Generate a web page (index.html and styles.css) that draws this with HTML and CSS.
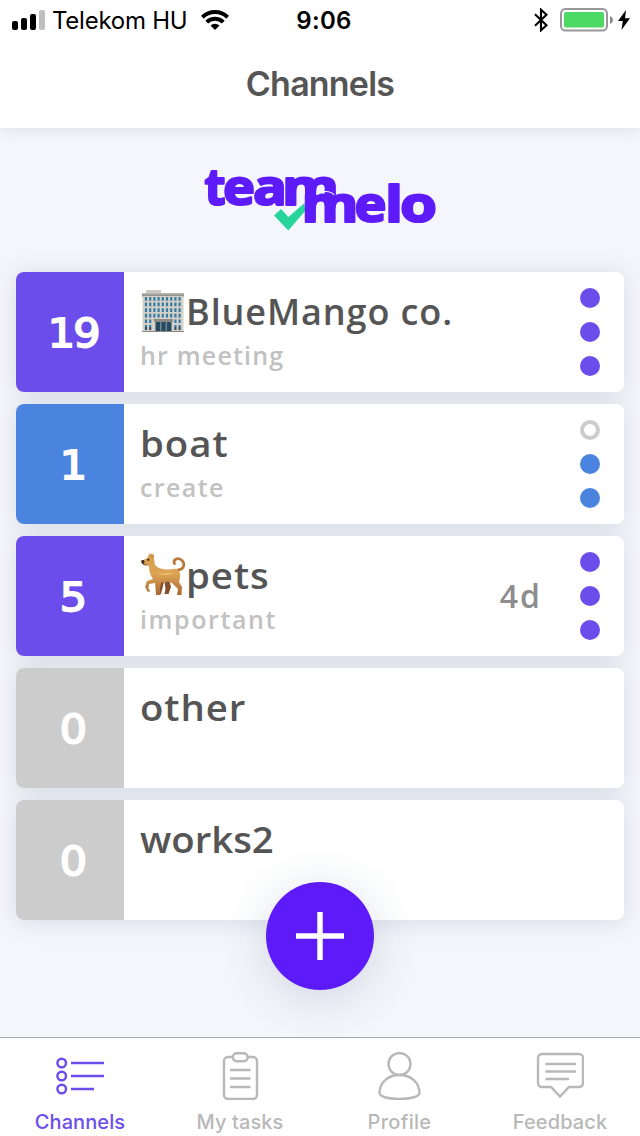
FILE: index.html
```
<!DOCTYPE html>
<html lang="en">
<head>
<meta charset="utf-8">
<title>Channels</title>
<link rel="stylesheet" href="styles.css">
</head>
<body>
<div class="screen">
  <header class="header">
    <div class="status">
      <div class="status-left">
        <svg width="33" height="20" viewBox="0 0 33 20"><rect x="0" y="11" width="6" height="9" rx="2"/><rect x="9" y="8" width="6" height="12" rx="2"/><rect x="18" y="4" width="6" height="16" rx="2"/><rect x="27" y="0" width="6" height="20" rx="2" fill="#bfbfbf"/></svg>
        <span class="carrier">Telekom HU</span>
        <svg class="wifi" width="28" height="20" viewBox="0 0 28 20" fill="none" stroke="#000" stroke-width="4"><path d="M1.300 7.200a18.200 18.200 0 0 1 25.400 0"/><path d="M5.700 12.200a11.800 11.800 0 0 1 16.600 0"/><path d="M14 20l-4.500-4.400a6.200 6.200 0 0 1 9 0z" fill="#000" stroke="none"/></svg>
      </div>
      <span class="time">9:06</span>
      <div class="status-right">
        <svg width="14" height="24" viewBox="0 0 14 24" fill="none" stroke="#000" stroke-width="2.100"><path d="M1 6.300l11.500 11L7 22.300V1.700l5.500 5L1 17.700"/></svg>
        <svg class="battery" width="54" height="24" viewBox="0 0 54 24"><rect x="1" y="1" width="46" height="21.500" rx="4.500" fill="#fff" stroke="#999" stroke-width="2"/><rect x="4" y="4" width="40" height="15.500" rx="2" fill="#4cd964"/><path d="M50 8c4 1.500 4 6.500 0 8z" fill="#8c8c8c"/></svg>
        <svg class="bolt" width="12" height="20" viewBox="0 0 12 20"><path d="M8 0L0 11h4.800L3.500 20 12 8.300H7z"/></svg>
      </div>
    </div>
    <h1 class="title">Channels</h1>
  </header>
  <main class="content">
    <svg class="logo" width="240" height="72" viewBox="200 162 240 72">
      <path d="M274 215.500l7-6.500 7.400 8 15.900-13.700 1 7.500-17 19.600z" fill="#27d49c"/>
      <g class="logo-text">
        <text y="205" x="204.500" textLength="21" lengthAdjust="spacingAndGlyphs">t</text>
        <text y="205" x="223" textLength="32" lengthAdjust="spacingAndGlyphs">e</text>
        <text y="205" x="253" textLength="34" lengthAdjust="spacingAndGlyphs">a</text>
        <text y="205" x="282" textLength="57" lengthAdjust="spacingAndGlyphs">m</text>
        <text y="221.500" x="301.500" textLength="57" lengthAdjust="spacingAndGlyphs">m</text>
        <text y="221.500" x="354.500" textLength="32" lengthAdjust="spacingAndGlyphs">e</text>
        <text y="221.500" x="385" textLength="18" lengthAdjust="spacingAndGlyphs">l</text>
        <text y="221.500" x="400" textLength="37" lengthAdjust="spacingAndGlyphs">o</text>
      </g>
      <path d="M317.500 195q3-3.500 8-3.500 6 0 8.500 3.500" fill="none" stroke="#f5f6fb" stroke-width="1.100"/>
    </svg>
    <div class="list">
      <article class="card">
        <div class="count violet"><span class="wide pair">19</span></div>
        <div class="info">
          <h2 class="name blue-mango"><svg class="emoji" width="44" height="44" viewBox="0 0 44 44">
            <rect x="5" y="1" width="15" height="4" fill="#c9c8c3"/><path d="M1 4h42v4H1z" fill="#96938e"/><path d="M1 4h42v1.500H1z" fill="#bab7b2"/><rect x="1.500" y="7" width="41" height="36" fill="#d5d0c8"/>
            <path d="M5 8v30M9.200 8v30M13.400 8v23M17.600 8v23M21.800 8v23M26 8v23M30.200 8v23M34.400 8v30M38.600 8v30" stroke="#367da6" stroke-width="2.200" stroke-dasharray="3.700 1.900"/>
            <path d="M5 38v3M9.200 38v3M34.400 38v3M38.600 38v3" stroke="#33546b" stroke-width="2.200"/>
            <rect x="13" y="30" width="19" height="3" fill="#8b8984"/><rect x="14.500" y="33" width="16" height="10" fill="#274a60"/><path d="M19.800 33v10M25.200 33v10" stroke="#91a7b1"/><path d="M1 42.500h42" stroke="#8b8882"/>
          </svg>BlueMango co.</h2>
          <p class="topic hr">hr meeting</p>
        </div>
        <div class="dots violet-dots"><i></i><i></i><i></i></div>
      </article>
      <article class="card">
        <div class="count blue"><span class="wide">1</span></div>
        <div class="info"><h2 class="name"><span class="stretch">boat</span></h2><p class="topic">create</p></div>
        <div class="dots blue-dots"><i class="empty"></i><i></i><i></i></div>
      </article>
      <article class="card">
        <div class="count violet"><span class="wide">5</span></div>
        <div class="info">
          <h2 class="name"><svg class="emoji dog" width="44" height="44" viewBox="0 0 44 44">
            <defs><linearGradient id="fur" x1="0" y1="0" x2="0" y2="1"><stop stop-color="#d89c50"/><stop offset=".5" stop-color="#dda454"/><stop offset="1" stop-color="#a86735"/></linearGradient></defs>
            <path d="M16 28l1 7-1 7h4l3-12zM28 27l2 8-2.500 7h-4l1-5-1-7z" fill="#87502c"/>
            <path d="M37 18c7-1 7-7 3.500-10-4-3-9 0-7 3.500" fill="none" stroke="#b97837" stroke-width="2.800" stroke-linecap="round"/>
            <path d="M1 9l5-3 3-5 1.500 3 2-3 .5 6 1 6c5 5 11 5 18 4 5-1 8 3 7 9l-1 4 3 5-.5 8h-4.500l1-6-6-6c-4-2-8-1-11 0l-1 5 .5 7h-4.500l-1-12-6 1-.5 5 2 2-2.500 1-3-5 2-6 6-2c-3-4-4-8-4-13l-6-2z" fill="url(#fur)"/>
            <path d="M10 3l1-1.500.8 4.500z" fill="#a65442"/><circle cx="7.300" cy="7.800" r="1" fill="#24150e"/><path d="M0 8.500l3-.5.5 3L1 12z" fill="#39251e"/><path d="M2 12.500l4 .5" stroke="#754425"/>
            <path d="M15 20c6 3 11 0 18 1-7 3-12 3-18-1z" fill="#ebba70"/>
          </svg><span class="stretch">pets</span></h2>
          <p class="topic important">important</p>
        </div>
        <span class="age">4d</span>
        <div class="dots violet-dots"><i></i><i></i><i></i></div>
      </article>
      <article class="card"><div class="count grey"><span class="wide">0</span></div><div class="info"><h2 class="name"><span class="stretch">other</span></h2></div></article>
      <article class="card"><div class="count grey"><span class="wide">0</span></div><div class="info"><h2 class="name works"><span class="stretch">works2</span></h2></div></article>
    </div>
    <button class="add" aria-label="Add channel"><svg width="48" height="48" viewBox="0 0 48 48"><path d="M24 0v48M0 24h48" stroke="#fff" stroke-width="5.500"/></svg></button>
  </main>
  <nav class="tabs">
    <a class="tab active"><svg width="48" height="48" viewBox="0 0 48 48"><circle cx="5.700" cy="11" r="4.300"/><circle cx="5.700" cy="24" r="4.300"/><circle cx="5.700" cy="37" r="4.300"/><path d="M15 11h33M15 24h33M15 37h23"/></svg><span>Channels</span></a>
    <a class="tab"><svg width="48" height="48" viewBox="0 0 48 48"><path d="M16.500 5H12a4 4 0 0 0-4 4v34a4 4 0 0 0 4 4h25a4 4 0 0 0 4-4V9a4 4 0 0 0-4-4h-5"/><rect x="17" y="1.200" width="14.500" height="8" rx="3.500"/><path d="M14 18h20.500M14 26.500h20.500M14 35h20.500"/></svg><span>My tasks</span></a>
    <a class="tab"><svg width="48" height="48" viewBox="0 0 48 48"><circle cx="23.500" cy="12" r="11"/><path d="M23.500 23C12 23 3.500 30.500 3.500 41c0 8 40 8 40 0 0-10.500-8.500-18-20-18z"/></svg><span class="profile">Profile</span></a>
    <a class="tab"><svg width="48" height="48" viewBox="0 0 48 48"><path d="M6 2h37a4 4 0 0 1 4 4v25a4 4 0 0 1-4 4H33l-9 9.500L15 35H6a4 4 0 0 1-4-4V6a4 4 0 0 1 4-4z"/><path d="M9.500 12H40M9.500 19.500H40M9.500 27H33"/></svg><span>Feedback</span></a>
  </nav>
</div>
</body>
</html>
```
FILE: styles.css
```
* { box-sizing: border-box; }
body { margin: 0; font-family: Inter, "Liberation Sans", sans-serif; }
h1, h2, p { margin: 0; }
svg { display: block; flex: none; }
.screen { width: 640px; height: 1136px; display: flex; flex-direction: column; background: #f5f6fb; overflow: hidden; }
.header { height: 128px; background: #fff; box-shadow: 0 2px 14px rgba(70, 85, 110, .12); }
.status { height: 40px; display: grid; grid-template-columns: 1fr auto 1fr; align-items: center; padding: 0 10px 0 12px; }
.status-left, .status-right { display: flex; align-items: center; }
.status-right { justify-content: flex-end; }
.carrier { margin-left: 7px; padding-top: 2px; font-size: 24px; line-height: 38px; letter-spacing: -.25px; white-space: nowrap; }
.wifi { margin-left: 14px; }
.time { font-size: 24px; padding-top: 2px; line-height: 38px; font-weight: 600; letter-spacing: .3px; margin-left: 6px; }
.battery { margin-left: 12px; }
.bolt { margin-left: 4px; }
.title { text-align: center; font-size: 34px; line-height: 88px; font-weight: 600; letter-spacing: -.8px; color: #555; }
.content { flex: 1; padding: 34px 16px 0; display: flex; flex-direction: column; align-items: center; }
.logo { overflow: visible; }
.logo-text { font-family: "Open Sans", sans-serif; font-weight: 700; font-size: 51px; fill: #5e1bfa; stroke: #5e1bfa; stroke-width: 2.2px; stroke-linejoin: round; }
.list { margin-top: 38px; width: 608px; display: flex; flex-direction: column; gap: 12px; position: relative; isolation: isolate; }
.card { height: 120px; display: flex; border-radius: 8px; background: #fff; position: relative; }
.card::before { content: ""; position: absolute; inset: 0; z-index: -1; border-radius: 8px; box-shadow: 0 2px 24px rgba(65, 90, 125, .17); }
.count { width: 108px; flex: none; border-radius: 8px 0 0 8px; color: #fff; font-family: "DejaVu Sans", sans-serif; font-size: 39px; line-height: 123px; text-align: center; padding-left: 7px; -webkit-text-stroke: 1.8px #fff; }
.wide { display: inline-block; transform: scaleX(1.1); }
.pair { letter-spacing: -1.5px; }
.violet { background: #6b4deb; }
.blue { background: #4a84de; }
.grey { background: #ccc; }
.info { flex: 1; padding: 12px 0 0 16px; font-family: "Open Sans", sans-serif; }
.name { display: flex; align-items: center; height: 56px; font-size: 36px; line-height: 56px; font-weight: 600; letter-spacing: .9px; color: #555; white-space: nowrap; }
.stretch { transform: scaleX(1.065); transform-origin: left; }
.works { letter-spacing: 0; }
.emoji { margin: 0 1px 2px; }
.dog { margin-bottom: 5px; }
.topic { margin-top: -2px; font-size: 25px; line-height: 34px; font-weight: 600; letter-spacing: 1.4px; color: #c1c1c1; }
.hr { letter-spacing: 1.2px; }
.important { letter-spacing: 1.6px; }
.age { font-family: "Open Sans", sans-serif; font-size: 32px; line-height: 120px; font-weight: 600; letter-spacing: 2px; color: #8d8d8d; margin-right: 38px; }
.dots { width: 20px; margin-right: 24px; display: flex; flex-direction: column; gap: 14px; padding-top: 16px; }
.dots i { width: 20px; height: 20px; border-radius: 50%; }
.violet-dots i { background: #6b4deb; }
.blue-dots i { background: #4a84de; }
.dots .empty { background: #fff; border: 4px solid #ccc; }
.add { position: relative; z-index: 1; flex: none; width: 108px; height: 108px; margin-top: -38px; padding: 0; border: 0; border-radius: 50%; background: #5e1bfa; display: flex; align-items: center; justify-content: center; box-shadow: 0 8px 48px rgba(55, 80, 115, .2); }
.tabs { height: 99px; border-top: 1px solid #a9a9ad; background: #fff; display: grid; grid-template-columns: repeat(4, 1fr); position: relative; }
.tab { display: flex; flex-direction: column; align-items: center; padding-top: 14px; color: #b8b8b8; font-size: 20px; line-height: 24px; font-weight: 500; letter-spacing: .1px; }
.tab svg { fill: none; stroke: currentColor; stroke-width: 2.4; }
.tab span { margin-top: 10px; }
.profile { letter-spacing: .3px; margin-right: 1px; }
.active { color: #6b4deb; }
```
